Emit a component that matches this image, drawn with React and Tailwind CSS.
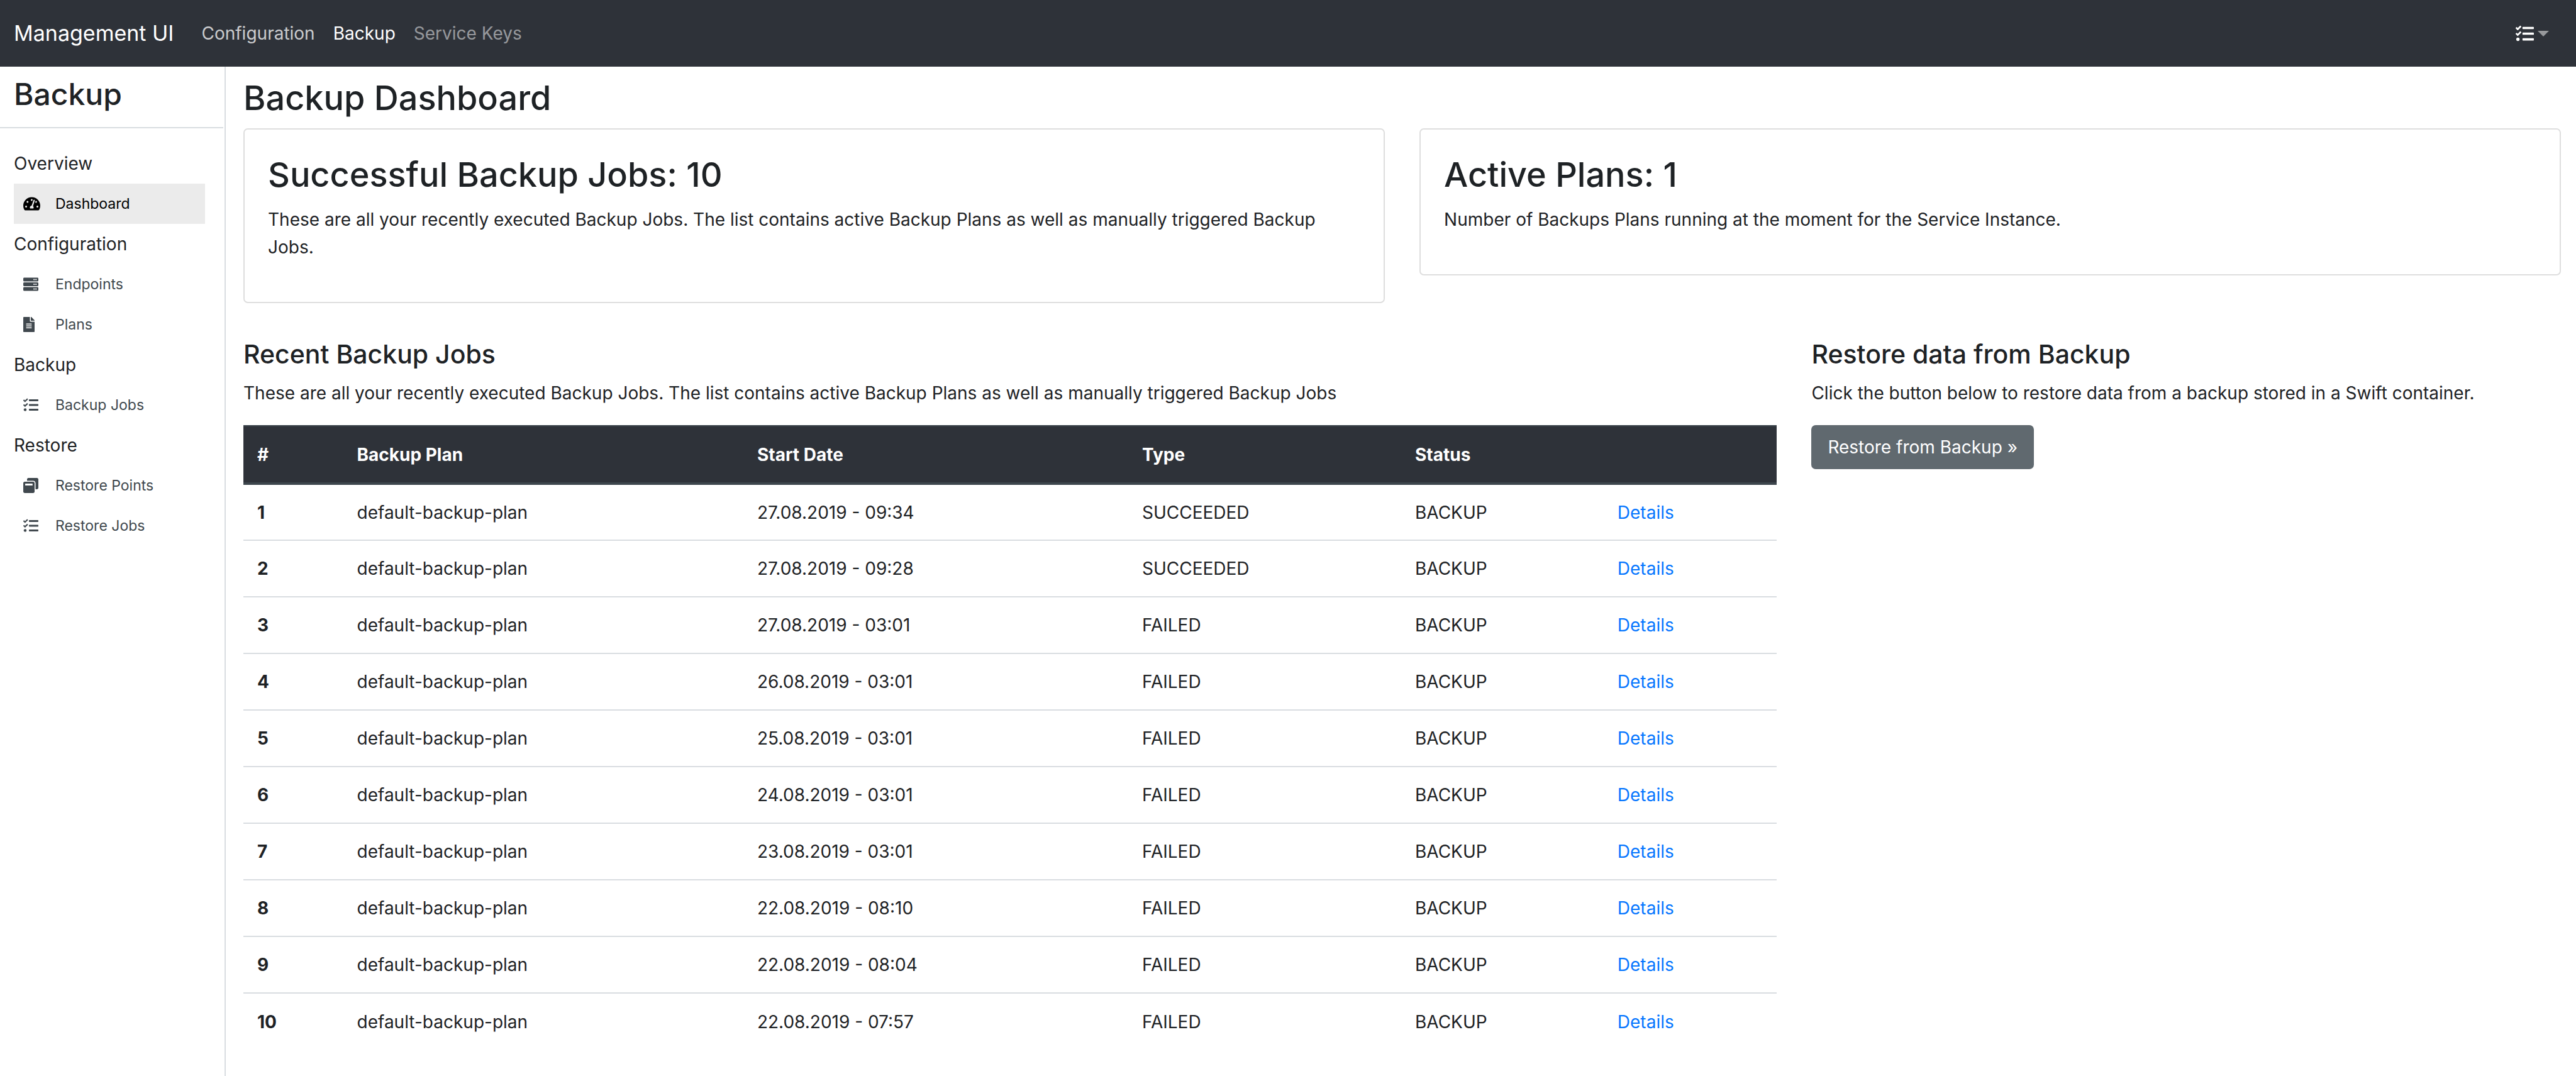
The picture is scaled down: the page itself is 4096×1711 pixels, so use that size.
import { FaTachometerAlt, FaServer, FaFileAlt, FaTasks, FaWindowRestore } from "react-icons/fa";

const sections = [
  {
    title: "Overview",
    items: [{ label: "Dashboard", Icon: FaTachometerAlt, iconClass: "h-[24px] w-[27px]", active: true }],
  },
  {
    title: "Configuration",
    items: [
      { label: "Endpoints", Icon: FaServer, iconClass: "size-[24px]" },
      { label: "Plans", Icon: FaFileAlt, iconClass: "h-[24px] w-[18px]" },
    ],
  },
  { title: "Backup", items: [{ label: "Backup Jobs", Icon: FaTasks, iconClass: "size-[24px]" }] },
  {
    title: "Restore",
    items: [
      { label: "Restore Points", Icon: FaWindowRestore, iconClass: "size-[24px]" },
      { label: "Restore Jobs", Icon: FaTasks, iconClass: "size-[24px]" },
    ],
  },
];

const jobs = [
  ["27.08.2019 - 09:34", "SUCCEEDED"],
  ["27.08.2019 - 09:28", "SUCCEEDED"],
  ["27.08.2019 - 03:01", "FAILED"],
  ["26.08.2019 - 03:01", "FAILED"],
  ["25.08.2019 - 03:01", "FAILED"],
  ["24.08.2019 - 03:01", "FAILED"],
  ["23.08.2019 - 03:01", "FAILED"],
  ["22.08.2019 - 08:10", "FAILED"],
  ["22.08.2019 - 08:04", "FAILED"],
  ["22.08.2019 - 07:57", "FAILED"],
];

function TopBar() {
  return (
    <header className="flex h-[106px] items-center bg-[#2e3239] px-[22px] text-white">
      <a href="#" className="mr-[44px] text-[34px]">Management UI</a>
      <nav className="flex grow gap-[29px]">
        <a href="#" className="text-white/75">Configuration</a>
        <a href="#" aria-current="page">Backup</a>
        <a href="#" className="text-white/50">Service Keys</a>
      </nav>
      <button type="button" aria-label="Tasks" className="mr-[21px] flex items-center gap-[6px]">
        <FaTasks className="size-[29px]" />
        <svg viewBox="0 0 20 10" className="h-[9px] w-[18px] text-white/50" fill="currentColor" aria-hidden="true">
          <path d="M0 0h20L10 10z" />
        </svg>
      </button>
    </header>
  );
}

function Sidebar() {
  return (
    <aside className="w-[359px] shrink-0 border-r-2 border-[#d9dde1]">
      <div className="mr-[2px] flex h-[98px] items-center border-b-2 border-[#d9dde1] pb-[8px] pl-[22px]">
        <h2 className="text-[48px] leading-[60px] font-medium">Backup</h2>
      </div>
      <nav className="pt-[24px] pr-[31px] pl-[22px]">
        {sections.map((section) => (
          <section key={section.title}>
            <h3 className="leading-[64px]">{section.title}</h3>
            <ul>
              {section.items.map(({ label, Icon, iconClass, active }) => (
                <li key={label}>
                  <a
                    href="#"
                    className={
                      active
                        ? "flex h-[64px] items-center bg-[#ebebeb] pl-[15px] text-[23px] text-black"
                        : "flex h-[64px] items-center pl-[15px] text-[23px] text-[#40484e]"
                    }
                  >
                    <span className="w-[51px]">
                      <Icon className={iconClass} />
                    </span>
                    {label}
                  </a>
                </li>
              ))}
            </ul>
          </section>
        ))}
      </nav>
    </aside>
  );
}

function StatCard({ title, children }) {
  return (
    <article className="rounded-[7px] border-2 border-[#dedede] px-[37px] pt-[37px] pb-[65px]">
      <h2 className="mb-[14px] text-[54px] leading-[70px] font-medium">{title}</h2>
      <p>{children}</p>
    </article>
  );
}

function JobsTable() {
  return (
    <table className="w-full table-fixed border-collapse text-left">
      <colgroup>
        <col className="w-[6.5%]" />
        <col className="w-[26.1%]" />
        <col className="w-[25.1%]" />
        <col className="w-[17.8%]" />
        <col className="w-[13.2%]" />
        <col />
      </colgroup>
      <thead>
        <tr className="h-[92px] border-t-2 border-b-4 border-[#3d464d] bg-[#2e3239] text-white">
          <th className="px-[22px] font-bold">#</th>
          <th className="px-[22px] font-bold">Backup Plan</th>
          <th className="px-[22px] font-bold">Start Date</th>
          <th className="px-[22px] font-bold">Type</th>
          <th className="px-[22px] font-bold">Status</th>
          <th className="px-[22px]"></th>
        </tr>
      </thead>
      <tbody>
        {jobs.map(([date, type], i) => (
          <tr key={date} className="h-[90px] border-b-2 border-[#d9dde1] last:border-b-0">
            <th scope="row" className="px-[22px] font-bold">{i + 1}</th>
            <td className="px-[22px]">default-backup-plan</td>
            <td className="px-[22px]">{date}</td>
            <td className="px-[22px]">{type}</td>
            <td className="px-[22px]">BACKUP</td>
            <td className="px-[22px]">
              <a href="#" className="text-[#0676ff]">Details</a>
            </td>
          </tr>
        ))}
      </tbody>
    </table>
  );
}

export default function App() {
  return (
    <div className="flex min-h-screen flex-col bg-white font-['Inter','Liberation_Sans',sans-serif] text-[28px] leading-[44px] text-[#1e2225]">
      <TopBar />
      <div className="flex grow">
        <Sidebar />
        <main className="grow pt-[15px] pr-[24px] pl-[28px]">
          <h1 className="mb-[13px] text-[54px] leading-[70px] font-medium">Backup Dashboard</h1>
          <div className="grid grid-cols-2 items-start gap-[55px]">
            <StatCard title="Successful Backup Jobs: 10">
              These are all your recently executed Backup Jobs. The list contains active Backup Plans as well as
              manually triggered Backup Jobs.
            </StatCard>
            <StatCard title="Active Plans: 1">
              Number of Backups Plans running at the moment for the Service Instance.
            </StatCard>
          </div>
          <div className="mt-[55px] grid grid-cols-12 gap-[55px]">
            <section className="col-span-8">
              <h2 className="mb-[14px] text-[41px] leading-[52px] font-medium">Recent Backup Jobs</h2>
              <p className="mb-[29px]">
                These are all your recently executed Backup Jobs. The list contains active Backup Plans as well as
                manually triggered Backup Jobs
              </p>
              <JobsTable />
            </section>
            <section className="col-span-4">
              <h2 className="mb-[14px] text-[41px] leading-[52px] font-medium">Restore data from Backup</h2>
              <p className="mb-[29px]">
                Click the button below to restore data from a backup stored in a Swift container.
              </p>
              <button type="button" className="h-[70px] rounded-[7px] bg-[#60696f] px-[26px] text-white">
                Restore from Backup »
              </button>
            </section>
          </div>
        </main>
      </div>
    </div>
  );
}
